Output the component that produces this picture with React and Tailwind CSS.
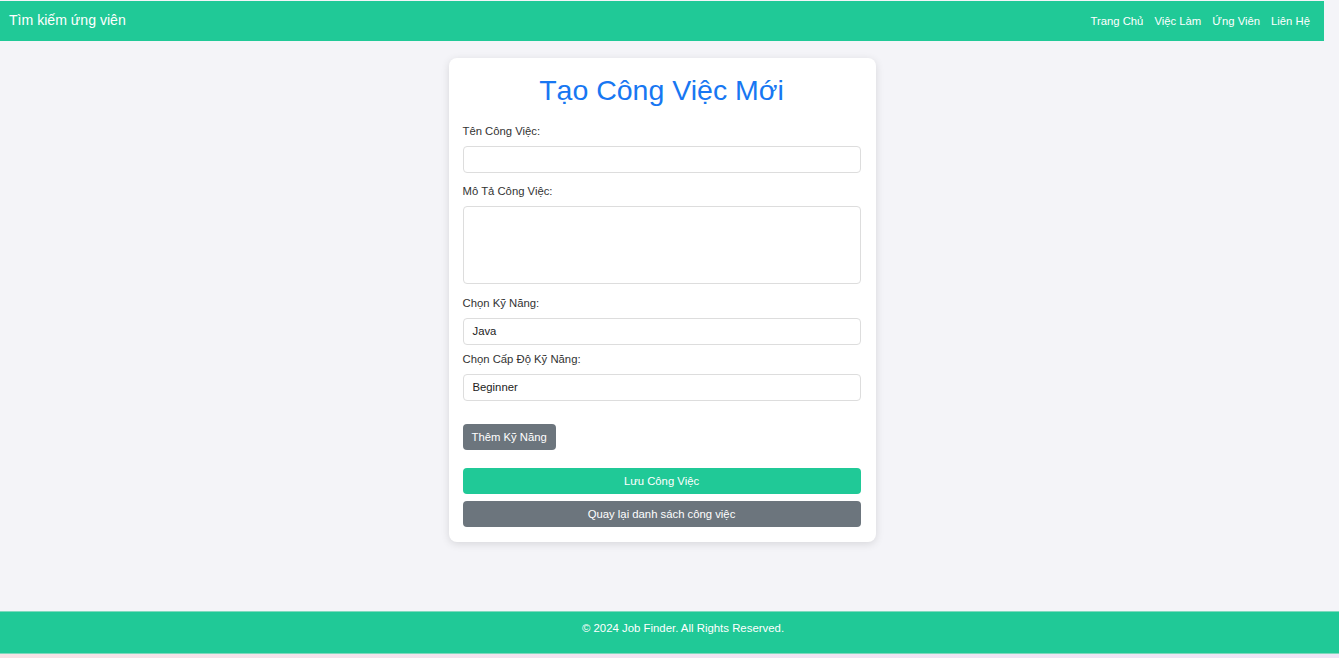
import React from 'react';

const navLinks = ['Trang Chủ', 'Việc Làm', 'Ứng Viên', 'Liên Hệ'];

const Field = ({ label, children, className = '' }) => (
  <div className={className}>
    <label className="block text-[11.3px] leading-[16px] text-[#333] mb-[7px]">{label}</label>
    {children}
  </div>
);

const App = () => {
  return (
    <div className="min-h-[658px] bg-[#f4f4f8] flex flex-col font-['Liberation_Sans',Arial,sans-serif]">
      {/* Header */}
      <header className="mt-px mr-[15px] h-10 bg-[#20c997] flex items-center justify-between pl-[9px] pr-[14px]">
        <h1 className="text-[14.1px] text-white">Tìm kiếm ứng viên</h1>
        <nav className="flex gap-[11px]">
          {navLinks.map((link) => (
            <a key={link} href="#" className="text-[11.3px] text-white">
              {link}
            </a>
          ))}
        </nav>
      </header>

      {/* Form card */}
      <main className="mr-[15px] flex justify-center pt-[17px]">
        <div className="w-[427px] bg-white rounded-lg shadow-[0_2px_8px_rgba(0,0,0,0.12)] pl-[14px] pr-[15px] pt-[15px] pb-[15px]">
          <h2 className="text-[28.5px] leading-[34px] text-center text-[#1877f2] mb-[16px]">Tạo Công Việc Mới</h2>

          <Field label="Tên Công Việc:" className="mb-[10px]">
            <input type="text" className="block w-full h-[27px] border border-[#ddd] rounded px-2 text-[11.3px]" />
          </Field>

          <Field label="Mô Tả Công Việc:" className="mb-[11px]">
            <textarea className="block w-full h-[78px] border border-[#ddd] rounded px-2 text-[11.3px] resize-none" />
          </Field>

          <Field label="Chọn Kỹ Năng:" className="mb-[6px]">
            <div className="w-full h-[27px] border border-[#ddd] rounded px-[9px] flex items-center text-[11.3px] text-[#222]">
              Java
            </div>
          </Field>

          <Field label="Chọn Cấp Độ Kỹ Năng:" className="mb-[23px]">
            <div className="w-full h-[27px] border border-[#ddd] rounded px-[9px] flex items-center text-[11.3px] text-[#222]">
              Beginner
            </div>
          </Field>

          <button className="h-[26px] px-[9px] bg-[#6c757d] text-white text-[11.3px] rounded mb-[18px]">
            Thêm Kỹ Năng
          </button>

          <button className="block w-full h-[26px] bg-[#20c997] text-white text-[11.3px] rounded mb-[7px]">
            Lưu Công Việc
          </button>
          <button className="block w-full h-[26px] bg-[#6c757d] text-white text-[11.3px] rounded">
            Quay lại danh sách công việc
          </button>
        </div>
      </main>

      <div className="flex-1" />

      {/* Footer */}
      <footer className="h-[43px] bg-[#20c997] border-y border-[#7fd9bd] flex justify-center pt-[8px] pl-[27px]">
        <p className="text-[11.4px] text-white">© 2024 Job Finder. All Rights Reserved.</p>
      </footer>
      <div className="h-[4px] bg-gradient-to-r from-[#f6e3e6] via-[#f0e4f2] to-[#ece6f6]" />
    </div>
  );
};

export default App;
